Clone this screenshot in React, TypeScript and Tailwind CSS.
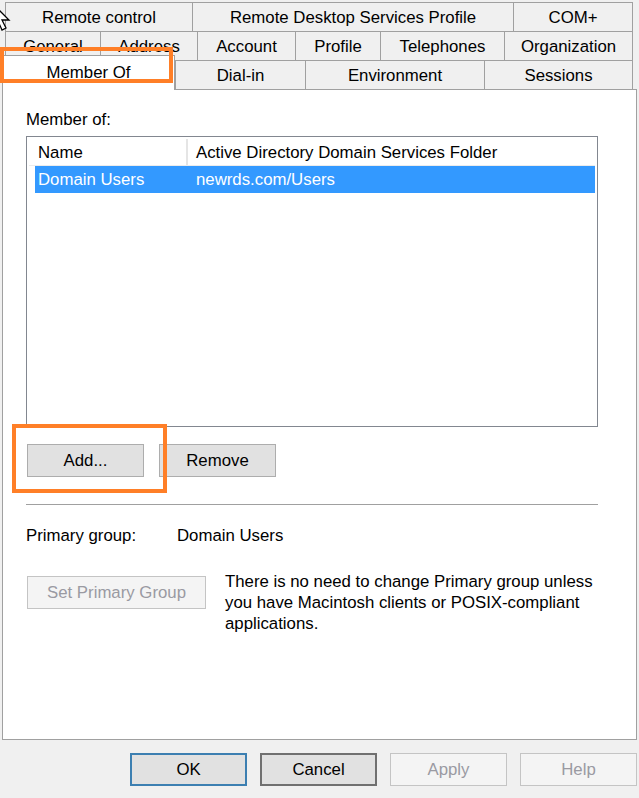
import React from "react";

const tabBase =
  "flex items-center justify-center border-l border-t border-[#a0a0a0] bg-[#f0f0f0] text-black h-full";

function Tab({ w, label, last }: { w: string; label: string; last?: boolean }) {
  return (
    <div className={`${tabBase} ${w} ${last ? "border-r" : ""}`}>
      <span>{label}</span>
    </div>
  );
}

function Btn({
  label,
  w = "w-[117px]",
  variant = "normal",
}: {
  label: string;
  w?: string;
  variant?: "normal" | "default" | "focus" | "disabled";
}) {
  const v =
    variant === "default"
      ? "border-2 border-[#3c7fb1] bg-[#e1e1e1] text-black"
      : variant === "focus"
      ? "border-2 border-[#707070] bg-[#e1e1e1] text-black"
      : variant === "disabled"
      ? "border border-[#c4c4c4] bg-[#f4f4f4] text-[#9a9aa2]"
      : "border border-[#adadad] bg-[#e1e1e1] text-black";
  return (
    <div className={`flex items-center justify-center h-[33px] ${w} ${v}`}>
      {label}
    </div>
  );
}

export default function App() {
  return (
    <div className="relative w-[639px] h-[798px] overflow-hidden bg-[#f0f0f0] font-['Liberation_Sans',Arial,sans-serif] text-[16.8px] leading-[19px] text-black">
      {/* tab rows */}
      <div className="pt-[2px]">
        <div className="flex h-[29px] pl-[5px]">
          <Tab w="w-[187px]" label="Remote control" />
          <Tab w="w-[321px]" label="Remote Desktop Services Profile" />
          <Tab w="w-[120px]" label="COM+" last />
        </div>
        <div className="flex h-[29px] pl-[5px]">
          <Tab w="w-[95px]" label="General" />
          <Tab w="w-[97px]" label="Address" />
          <Tab w="w-[98px]" label="Account" />
          <Tab w="w-[85px]" label="Profile" />
          <Tab w="w-[124px]" label="Telephones" />
          <Tab w="w-[129px]" label="Organization" last />
        </div>
        <div className="flex h-[29px] items-end pl-[2px]">
          <div className="relative z-10 -mb-px flex h-[35px] w-[173px] items-center justify-center border-l border-r border-t border-[#a0a0a0] bg-white pb-[2px]">
            Member Of
          </div>
          <div className="flex h-full">
            <Tab w="w-[130px]" label="Dial-in" />
            <Tab w="w-[179px]" label="Environment" />
            <Tab w="w-[149px]" label="Sessions" last />
          </div>
        </div>
      </div>

      {/* panel */}
      <div className="ml-[2px] flex h-[651px] w-[635px] flex-col border border-[#a0a0a0] bg-white">
        <div className="ml-[23px] mt-[20px]">Member of:</div>
        <div className="ml-[23px] mt-[7px] h-[291px] w-[572px] border border-[#828790] bg-white p-[2px]">
          <div className="flex h-[27px] border-b border-[#ececec] bg-white">
            <div className="flex w-[159px] items-center border-r-2 border-[#e5e5e5] pl-[9px]">Name</div>
            <div className="flex flex-1 items-center pl-[8px]">Active Directory Domain Services Folder</div>
          </div>
          <div className="ml-[6px] flex h-[27px] bg-[#3399ff] text-white">
            <div className="flex w-[155px] items-center pl-[3px]">Domain Users</div>
            <div className="flex flex-1 items-center pl-[6px]">newrds.com/Users</div>
          </div>
        </div>
        <div className="ml-[24px] mt-[17px] flex gap-[15px]">
          <Btn label="Add..." />
          <Btn label="Remove" />
        </div>
        <div className="ml-[23px] mt-[27px] h-[2px] w-[572px] border-t border-[#a0a0a0] border-b border-b-white" />
        <div className="ml-[23px] mt-[20px] flex">
          <div className="w-[151px]">Primary group:</div>
          <div>Domain Users</div>
        </div>
        <div className="ml-[24px] mt-[26px] flex items-start gap-[19px]">
          <div className="mt-[5px]">
            <Btn label="Set Primary Group" w="w-[179px]" variant="disabled" />
          </div>
          <div className="leading-[21px]">
            There is no need to change Primary group unless
            <br />
            you have Macintosh clients or POSIX-compliant
            <br />
            applications.
          </div>
        </div>
      </div>

      {/* bottom buttons */}
      <div className="mt-[13px] flex gap-[13px] pl-[130px]">
        <Btn label="OK" variant="default" />
        <Btn label="Cancel" variant="focus" />
        <Btn label="Apply" variant="disabled" />
        <Btn label="Help" variant="disabled" />
      </div>

      {/* annotation boxes */}
      <div className="pointer-events-none absolute left-0 top-[47px] z-20 h-[36px] w-[173px] border-[4px] border-[#ff7f27]" />
      <div className="pointer-events-none absolute left-[12px] top-[424px] z-20 h-[69px] w-[155px] border-[4px] border-[#ff7f27]" />

      {/* mouse cursor */}
      <svg className="absolute -left-[9px] top-[2px] z-30" width="20" height="30" viewBox="0 0 20 30">
        <path d="M1 1 L1 25 L7 19 L11 28 L15 26 L11 18 L18 18 Z" fill="white" stroke="black" strokeWidth="1.3" />
      </svg>
    </div>
  );
}
